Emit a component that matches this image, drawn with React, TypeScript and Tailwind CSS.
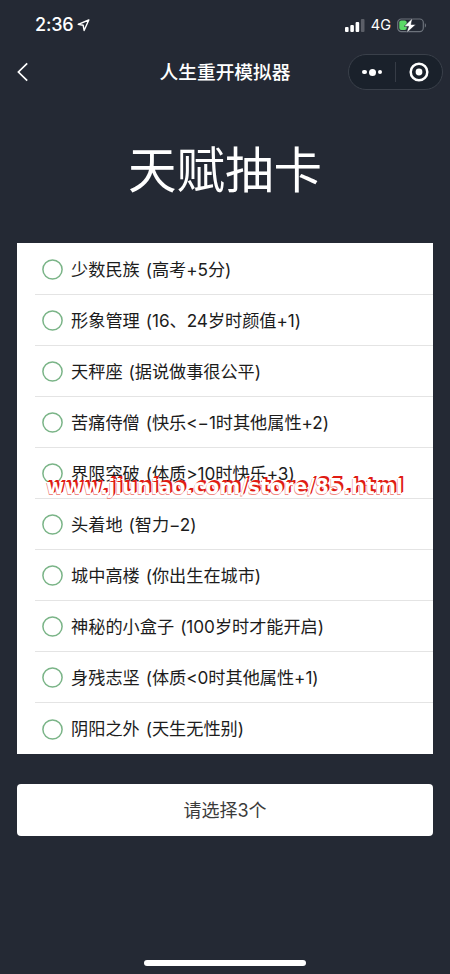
const rows = [
  { name: '少数民族', note: '(高考+5分)' },
  { name: '形象管理', note: '(16、24岁时颜值+1)' },
  { name: '天秤座', note: '(据说做事很公平)' },
  { name: '苦痛侍僧', note: '(快乐<−1时其他属性+2)' },
  { name: '界限突破', note: '(体质>10时快乐+3)' },
  { name: '头着地', note: '(智力−2)' },
  { name: '城中高楼', note: '(你出生在城市)' },
  { name: '神秘的小盒子', note: '(100岁时才能开启)' },
  { name: '身残志坚', note: '(体质<0时其他属性+1)' },
  { name: '阴阳之外', note: '(天生无性别)' },
];

function StatusBar() {
  return (
    <div className="flex h-[50px] items-center justify-between pl-[35px] pr-[23px]">
      <div className="flex items-center gap-[4px]">
        <span className="text-[18px] leading-none font-medium tracking-[-0.2px]">2:36</span>
        <svg width="13" height="13" viewBox="0 0 13 13" fill="none" stroke="currentColor" strokeWidth="1.4" strokeLinejoin="round">
          <path d="M11.8 1 1.2 5.3l5 1 .9 5.2z" />
        </svg>
      </div>
      <div className="flex items-center">
        <svg width="20" height="13" viewBox="0 0 20 13" fill="currentColor">
          <rect x="0" y="8" width="3.6" height="5" rx="1" />
          <rect x="5.3" y="6" width="3.6" height="7" rx="1" />
          <rect x="10.6" y="3" width="3.6" height="10" rx="1" />
          <rect x="15.9" y="0" width="3.6" height="13" rx="1" opacity=".25" />
        </svg>
        <span className="ml-[6px] text-[14.5px] leading-none">4G</span>
        <svg className="ml-[6px]" width="30" height="15" viewBox="0 0 30 15" fill="none">
          <rect x=".7" y="1" width="25.6" height="12.6" rx="3.6" stroke="#6c727b" strokeWidth="1.2" />
          <rect x="2.3" y="2.6" width="7.4" height="9.4" rx="2" fill="#5cd967" />
          <path d="M27.8 5.2c1.6.4 1.6 3.8 0 4.2z" fill="#6c727b" />
          <path d="M15.6 0 7 8.4h4.6L9.4 15 19 6.4h-4.9z" fill="#fff" stroke="#232834" strokeWidth=".6" />
        </svg>
      </div>
    </div>
  );
}

function NavBar() {
  return (
    <div className="grid h-[44px] grid-cols-[95px_1fr_95px] items-center px-[7px]">
      <svg className="ml-[10px]" width="12" height="20" viewBox="0 0 12 20" fill="none" stroke="currentColor" strokeWidth="1.7">
        <path d="M10.2 1.3 1.4 10l8.8 8.7" />
      </svg>
      <h1 className="pt-[2px] text-center text-[18.7px] leading-none font-medium">人生重开模拟器</h1>
      <div className="flex h-[36px] items-center rounded-full border border-[#3a404a] bg-[#1a212b]">
        <div className="flex flex-1 items-center justify-center gap-[2px]">
          <i className="size-[4.5px] rounded-full bg-white" />
          <i className="size-[7px] rounded-full bg-white" />
          <i className="size-[4.5px] rounded-full bg-white" />
        </div>
        <div className="h-[20px] w-px bg-[#363c46]" />
        <div className="flex flex-1 items-center justify-center">
          <svg className="size-[20px]" viewBox="0 0 20 20" fill="none">
            <circle cx="10" cy="10" r="8.3" stroke="currentColor" strokeWidth="2.5" />
            <circle cx="10" cy="10" r="3.4" fill="currentColor" />
          </svg>
        </div>
      </div>
    </div>
  );
}

export default function App() {
  return (
    <div className="relative flex h-[974px] w-[450px] flex-col overflow-hidden bg-[#242934] font-['Inter','Noto_Sans_CJK_SC',sans-serif] text-white">
      <StatusBar />
      <NavBar />
      <h2 className="mt-[47px] text-center text-[48.5px] leading-[60px] font-normal">天赋抽卡</h2>
      <ul className="mx-[17px] mt-[42px] flex h-[511px] flex-col bg-white pt-px text-[#1c1c1c]">
        {rows.map((row, i) => (
          <li key={row.name} className="flex flex-1 pl-[18px]">
            <label className={'flex flex-1 items-center pt-px pl-[7px] text-[17.2px] leading-none ' + (i < 9 ? 'border-b border-[#e4e4e4]' : '')}>
              <svg className="mr-[8px] size-[21px] shrink-0" viewBox="0 0 21 21" fill="none" stroke="#7ab487" strokeWidth="1.5">
                <circle cx="10.5" cy="10.5" r="9.6" />
              </svg>
              <span>{row.name}</span>
              <span className="ml-[6px] tracking-[-0.05px]">{row.note}</span>
            </label>
          </li>
        ))}
      </ul>
      <button className="mx-[17px] mt-[30px] h-[52px] shrink-0 rounded-[4px] bg-white pt-[2px] text-[18px] leading-none text-[#3c3c3c]">请选择3个</button>
      <div className="mx-auto mt-auto mb-[8px] h-[6px] w-[162px] rounded-full bg-white" />
      <div className="absolute top-[473px] left-[46px] font-['DejaVu_Sans_Condensed','DejaVu_Sans',sans-serif] text-[22px] leading-[28px] font-bold tracking-[0.3px] [font-stretch:condensed] whitespace-nowrap text-white [text-shadow:1px_-1px_0_#e01c14,2px_-2px_0_#e01c14,-0.5px_0.5px_0_#f08a84]">
        www.jiuniao.com/store/85.html
      </div>
    </div>
  );
}
